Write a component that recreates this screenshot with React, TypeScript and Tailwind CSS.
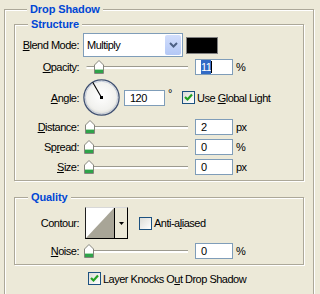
import React from 'react';

// Photoshop "Drop Shadow" layer style panel, Windows XP look
const etched = 'border border-[#ACA899] shadow-[inset_1px_1px_0_#fff,1px_1px_0_#fff]';

function Title({ children }: { children: React.ReactNode }) {
    return (
        <div className="-mt-[8px] ml-[13px] w-fit px-[3px] bg-[#ECE9D8] leading-[14px] font-bold tracking-[-0.1px] text-[#0046D5]">
            {children}
        </div>
    );
}

function Label({ children }: { children: React.ReactNode }) {
    return <div className="w-[64px] shrink-0 text-right leading-[14px]">{children}</div>;
}

function Thumb({ left }: { left: number }) {
    return (
        <svg className="absolute top-[1px]" style={{ left }} width="10" height="14" viewBox="0 0 10 14">
            <polygon points="0.5,5 5,0.5 9.5,5 9.5,13.5 0.5,13.5" fill="#ffffff" stroke="#85857c" />
            <rect x="1" y="10" width="8" height="3" fill="#2fa34a" />
            <rect x="1" y="9" width="8" height="1" fill="#a9dcb1" />
        </svg>
    );
}

function Slider({ left }: { left: number }) {
    return (
        <div className="relative ml-[4px] h-[16px] w-[108px] shrink-0">
            <div className="absolute left-[3px] top-[7px] h-[3px] w-[102px] rounded-l-[2px] border-t border-[#9c9a8f] bg-white" />
            <Thumb left={left} />
        </div>
    );
}

function Field({ children, w = 'w-[38px]' }: { children: React.ReactNode; w?: string }) {
    return (
        <div className={`flex h-[16px] ${w} shrink-0 items-center border border-[#7F9DB9] bg-white pl-[5px] leading-[14px]`}>
            {children}
        </div>
    );
}

function Check({ on }: { on: boolean }) {
    return (
        <div className="h-[13px] w-[13px] shrink-0 border border-[#1C5180] bg-gradient-to-br from-[#DCDCD7] to-white">
            {on && (
                <svg width="11" height="11" viewBox="0 0 11 11">
                    <polyline points="2,5 4.5,7.5 9,2.5" fill="none" stroke="#21A121" strokeWidth="2.2" />
                </svg>
            )}
        </div>
    );
}

function SliderRow({ label, value, unit, left, className = '' }: { label: React.ReactNode; value: string; unit: string; left: number; className?: string }) {
    return (
        <div className={`flex h-[16px] items-center ${className}`}>
            <Label>{label}</Label>
            <Slider left={left} />
            <div className="ml-[4px]">
                <Field>{value}</Field>
            </div>
            <span className="ml-[3px] leading-[14px]">{unit}</span>
        </div>
    );
}

function Dial() {
    return (
        <svg className="ml-[4px] shrink-0" width="37" height="37" viewBox="0 0 37 37">
            <defs>
                <radialGradient id="dialfill" cx="50%" cy="45%" r="55%">
                    <stop offset="0%" stopColor="#ffffff" />
                    <stop offset="75%" stopColor="#f1f1ee" />
                    <stop offset="100%" stopColor="#d9d9d2" />
                </radialGradient>
            </defs>
            <circle cx="18.5" cy="18.5" r="17.6" fill="url(#dialfill)" stroke="#3f5072" strokeWidth="1.3" />
            <circle cx="18.5" cy="18.5" r="16.3" fill="none" stroke="#b8c2d6" strokeWidth="0.8" />
            <line x1="18.5" y1="18.5" x2="9.7" y2="3.2" stroke="#000" strokeWidth="1.1" />
            <rect x="17" y="17" width="3" height="3" fill="#000" />
        </svg>
    );
}

export default function App() {
    return (
        <div className="h-[294px] w-[320px] overflow-hidden bg-[#ECE9D8] pl-[4px] pt-[9px] font-['Liberation_Sans',Arial,sans-serif] text-[11px] tracking-[-0.5px] text-black">
            <div className={`h-[300px] w-[310px] px-[9px] ${etched}`}>
                <Title>Drop Shadow</Title>

                {/* Structure */}
                <div className={`mt-[8px] pb-[5px] ${etched}`}>
                    <Title>Structure</Title>

                    <div className="mt-[2px] flex h-[24px] items-center">
                        <Label>
                            <u>B</u>lend Mode:
                        </Label>
                        <div className="ml-[4px] flex h-[24px] w-[100px] shrink-0 border border-[#7F9DB9] bg-white">
                            <div className="flex-1 self-center pl-[3px] leading-[14px]">Multiply</div>
                            <div className="m-[1px] flex w-[16px] items-center justify-center rounded-[2px] bg-gradient-to-b from-[#D2DEFC] to-[#B4C8F6]">
                                <svg width="9" height="6" viewBox="0 0 9 6">
                                    <polyline points="1,1 4.5,4.5 8,1" fill="none" stroke="#4D6185" strokeWidth="2" />
                                </svg>
                            </div>
                        </div>
                        <div className="ml-[3px] h-[17px] w-[32px] shrink-0 border border-[#808080] bg-black" />
                    </div>

                    <div className="mt-[2px] flex h-[16px] items-center">
                        <Label>
                            <u>O</u>pacity:
                        </Label>
                        <Slider left={11} />
                        <div className="ml-[4px]">
                            <Field>
                                <span className="bg-[#316AC5] text-white">11</span>
                                <span className="h-[12px] w-px bg-black" />
                            </Field>
                        </div>
                        <span className="ml-[3px] leading-[14px]">%</span>
                    </div>

                    <div className="mt-[4px] flex h-[37px] items-center">
                        <Label>
                            <u>A</u>ngle:
                        </Label>
                        <Dial />
                        <div className="ml-[4px]">
                            <Field w="w-[41px]">120</Field>
                        </div>
                        <span className="ml-[3px] w-[14px] -translate-y-[5px] leading-[14px]">°</span>
                        <Check on />
                        <span className="ml-[2px] leading-[14px]">
                            Use <u>G</u>lobal Light
                        </span>
                    </div>

                    <SliderRow className="mt-[3px]" label={<><u>D</u>istance:</>} value="2" unit="px" left={2} />
                    <SliderRow className="mt-[4px]" label={<>Sp<u>r</u>ead:</>} value="0" unit="%" left={1} />
                    <SliderRow className="mt-[4px]" label={<><u>S</u>ize:</>} value="0" unit="px" left={1} />
                </div>

                {/* Quality */}
                <div className={`mt-[16px] pb-[5px] ${etched}`}>
                    <Title>Quality</Title>

                    <div className="mt-[3px] flex h-[32px] items-center">
                        <Label>Contour:</Label>
                        <div className="ml-[6px] flex h-[32px] w-[43px] shrink-0 border border-black border-t-[#d8d8d8] border-l-[#202020]">
                            <svg width="28" height="30" viewBox="0 0 28 30" className="shrink-0">
                                <rect width="28" height="30" fill="#ffffff" />
                                <polygon points="0,30 28,0 28,30" fill="#A8A597" />
                            </svg>
                            <div className="w-px bg-black" />
                            <div className="flex flex-1 items-center justify-center bg-[#ECE9D8]">
                                <svg width="5" height="3" viewBox="0 0 5 3">
                                    <polygon points="0,0 5,0 2.5,3" fill="#000" />
                                </svg>
                            </div>
                        </div>
                        <div className="ml-[11px]">
                            <Check on={false} />
                        </div>
                        <span className="ml-[2px] leading-[14px]">
                            Anti-a<u>l</u>iased
                        </span>
                    </div>

                    <SliderRow className="mt-[4px]" label={<><u>N</u>oise:</>} value="0" unit="%" left={1} />
                </div>

                <div className="ml-[74px] mt-[7px] flex h-[13px] items-center">
                    <Check on />
                    <span className="ml-[2px] leading-[14px]">
                        Layer Knocks O<u>u</u>t Drop Shadow
                    </span>
                </div>
            </div>
        </div>
    );
}
